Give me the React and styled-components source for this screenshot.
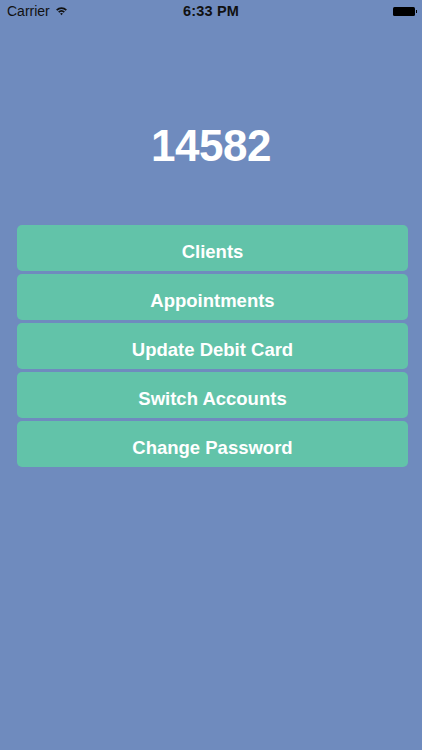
import styled, { createGlobalStyle } from "styled-components";

const GlobalStyle = createGlobalStyle`
  html, body {
    margin: 0;
    padding: 0;
    background: #6f8bbe;
  }
  body {
    font-family: "Liberation Sans", Arial, sans-serif;
  }
`;

const Screen = styled.div`
  width: 422px;
  height: 750px;
  background: #6f8bbe;
  display: flex;
  flex-direction: column;
`;

const StatusBar = styled.div`
  height: 22px;
  display: grid;
  grid-template-columns: 1fr auto 1fr;
  align-items: center;
  padding: 0 7px;
  color: #111;
  font-family: "Liberation Sans", Arial, sans-serif;
`;

const Carrier = styled.div`
  display: flex;
  align-items: center;
  gap: 5px;
  font-size: 14px;
`;

const Clock = styled.div`
  font-size: 14.5px;
  font-weight: bold;
  letter-spacing: 0.2px;
`;

const BatteryWrap = styled.div`
  display: flex;
  justify-content: flex-end;
  align-items: center;
`;

const Battery = styled.div`
  width: 22px;
  height: 9px;
  background: #000;
  border-radius: 1.5px;
  position: relative;

  &::after {
    content: "";
    position: absolute;
    right: -2px;
    top: 3px;
    width: 1.5px;
    height: 3px;
    background: #000;
  }
`;

const Score = styled.h1`
  margin: 99px 0 0;
  text-align: center;
  color: #fff;
  font-size: 44px;
  font-weight: bold;
  line-height: 50px;
  letter-spacing: -0.5px;
`;

const Menu = styled.div`
  display: flex;
  flex-direction: column;
  gap: 3px;
  margin: 54px 14px 0 17px;
`;

const MenuButton = styled.button`
  height: 46px;
  border: none;
  border-radius: 5px;
  background: #62c3a9;
  color: #fff;
  font-family: "Liberation Sans", Arial, sans-serif;
  font-size: 18.5px;
  font-weight: bold;
  padding: 8px 0 0;
  cursor: pointer;
`;

const items = [
  "Clients",
  "Appointments",
  "Update Debit Card",
  "Switch Accounts",
  "Change Password",
];

function Wifi() {
  return (
    <svg width="13" height="10" viewBox="0 0 12 10">
      <path d="M0.6 3.4 A8 8 0 0 1 11.4 3.4 L10.2 4.7 A6.2 6.2 0 0 0 1.8 4.7 Z" fill="#111" />
      <path d="M2.6 5.5 A5 5 0 0 1 9.4 5.5 L8.2 6.8 A3.3 3.3 0 0 0 3.8 6.8 Z" fill="#111" />
      <path d="M4.6 7.6 A2 2 0 0 1 7.4 7.6 L6 9.2 Z" fill="#111" />
    </svg>
  );
}

function App() {
  return (
    <Screen>
      <GlobalStyle />
      <StatusBar>
        <Carrier>
          Carrier
          <Wifi />
        </Carrier>
        <Clock>6:33 PM</Clock>
        <BatteryWrap>
          <Battery />
        </BatteryWrap>
      </StatusBar>
      <Score>14582</Score>
      <Menu>
        {items.map((item) => (
          <MenuButton key={item}>{item}</MenuButton>
        ))}
      </Menu>
    </Screen>
  );
}

export default App;
